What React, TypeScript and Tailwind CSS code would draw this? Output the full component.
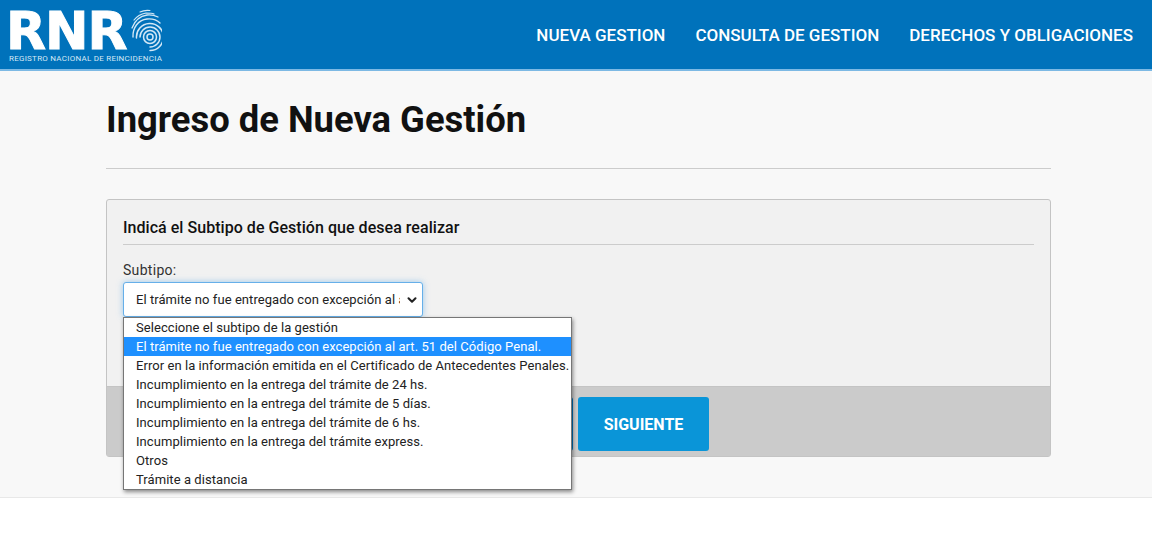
import { ChevronDown } from "lucide-react";

const options = [
  "Seleccione el subtipo de la gestión",
  "El trámite no fue entregado con excepción al art. 51 del Código Penal.",
  "Error en la información emitida en el Certificado de Antecedentes Penales.",
  "Incumplimiento en la entrega del trámite de 24 hs.",
  "Incumplimiento en la entrega del trámite de 5 días.",
  "Incumplimiento en la entrega del trámite de 6 hs.",
  "Incumplimiento en la entrega del trámite express.",
  "Otros",
  "Trámite a distancia",
];

function Fingerprint() {
  return (
    <svg width="31" height="43" viewBox="0 0 31 43" fill="none" stroke="#d3e8f6" strokeLinecap="round" className="ml-[4px] shrink-0">
      <circle cx="19" cy="28" r="3" strokeWidth="1.5" />
      <circle cx="19" cy="28" r="6.500" strokeWidth="1.500" />
      <path d="M9 28a10 10 0 1 1 10 10" strokeWidth="1.500" />
      <path d="M5.500 29a13.500 13.500 0 1 1 13.500 12.500" strokeWidth="1.500" />
      <path d="M2 28c-.5-9 5-17 14-18 6-.5 10 1 13 4" strokeWidth="1.400" />
      <path d="M1 19C4 11 9 7 16 6c5-.5 8 .5 11 2" strokeWidth="1.300" />
      <path d="M3 11c3-4 7-6 12-7 3 0 6 0 8 1" strokeWidth="1.200" />
      <path d="M9 3c3-1.500 6-2 10-1.500" strokeWidth="1.100" />
    </svg>
  );
}

export default function App() {
  return (
    <div className="min-h-[538px] bg-white font-['Roboto',sans-serif]">
      <header className="flex h-[71px] items-center justify-between border-b-2 border-[#7db9e4] bg-[#0072bb] pr-[19px] pl-[9px]">
        <div className="flex flex-col">
          <div className="flex h-[46px] items-end">
            <span className="mb-[2px] -ml-[3px] font-['DejaVu_Sans',sans-serif] text-[52px] leading-[38px] font-bold tracking-[-1px] text-white [-webkit-text-stroke:1px_white]">
              RNR
            </span>
            <Fingerprint />
          </div>
          <span className="mt-[2px] text-[8px] leading-[9px] tracking-[0.25px] whitespace-nowrap text-[#d5e8f5]">
            REGISTRO NACIONAL DE REINCIDENCIA
          </span>
        </div>
        <nav className="flex translate-y-[1px] items-center gap-[30px] text-[17px] font-medium text-white">
          <a href="#">NUEVA GESTION</a>
          <a href="#">CONSULTA DE GESTION</a>
          <a href="#">DERECHOS Y OBLIGACIONES</a>
        </nav>
      </header>

      <main className="h-[427px] border-b border-[#e8e8e8] bg-[#f8f8f8]">
        <div className="ml-[106px] w-[945px]">
          <h1 className="pt-[25px] text-[36.4px] leading-[48px] font-bold text-[#111111]">
            Ingreso de Nueva Gestión
          </h1>
          <hr className="mt-[24px] border-[#cccccc]" />

          <section className="relative mt-[30px] h-[258px] rounded-[3px] border border-[#c4c4c4] bg-[#f1f1f1]">
            <div className="px-[16px] pt-[18px]">
              <h2 className="border-b border-[#cccccc] pb-[6px] text-[16px] leading-[20px] font-medium tracking-[0.04px] text-[#111111]">
                Indicá el Subtipo de Gestión que desea realizar
              </h2>
              <label className="mt-[17px] block text-[14px] leading-[17px] tracking-[0.3px] text-[#333333]">
                Subtipo:
              </label>
              <div className="mt-[3px] flex h-[35px] w-[300px] items-center justify-between rounded-[3px] border border-[#66afe9] bg-white pr-[3px] pl-[12px] shadow-[0_0_6px_rgba(102,175,233,0.6)]">
                <span className="w-[264px] overflow-hidden pt-[1px] text-[13px] tracking-[0.06px] whitespace-nowrap text-[#222222]">
                  El trámite no fue entregado con excepción al art. 51 del Código Penal.
                </span>
                <ChevronDown size={14} strokeWidth={3.5} className="shrink-0 text-[#222222]" />
              </div>
            </div>

            <div className="absolute right-0 bottom-0 left-0 flex h-[70px] items-start gap-[5px] border-t border-[#c4c4c4] bg-[#cbcbcb] pt-[10px] pl-[340px]">
              <button className="h-[54px] w-[126px] rounded-[3px] bg-[#0072bb] pt-[1px] text-[16px] font-bold text-white">
                ANTERIOR
              </button>
              <button className="h-[54px] w-[131px] rounded-[3px] bg-[#0a95d8] pt-[1px] text-[16px] font-bold text-white">
                SIGUIENTE
              </button>
            </div>

            <ul className="absolute top-[117px] left-[16px] w-[449px] border border-[#767676] bg-white text-[13px] tracking-[0.06px] text-[#222222] shadow-[1px_2px_4px_rgba(0,0,0,0.45)]">
              {options.map((option, i) => (
                <li
                  key={option}
                  className={
                    i === 1
                      ? "h-[19px] bg-[#1e90ff] pl-[12px] leading-[19px] whitespace-nowrap text-white"
                      : "h-[19px] pl-[12px] leading-[19px] whitespace-nowrap"
                  }
                >
                  {option}
                </li>
              ))}
            </ul>
          </section>
        </div>
      </main>
    </div>
  );
}
